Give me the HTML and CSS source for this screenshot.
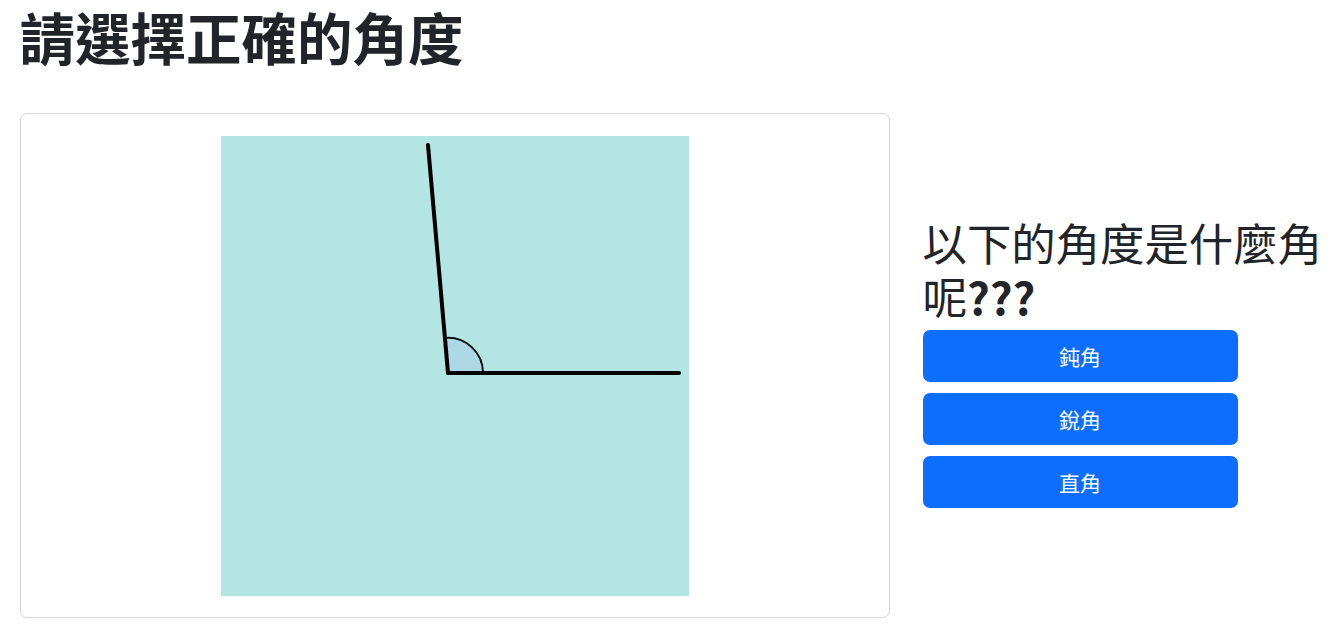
FILE: index.html
```html
<!DOCTYPE html>
<html lang="zh-Hant">
<head>
<meta charset="utf-8">
<title>請選擇正確的角度</title>
<link rel="stylesheet" href="styles.css">
</head>
<body>
<div class="page">
  <h1 class="title">請選擇正確的角度</h1>
  <div class="main">
    <div class="card">
      <svg class="canvas" width="468" height="460" viewBox="0 0 468 460">
        <rect x="0" y="0" width="468" height="460" fill="#b3e5e3"/>
        <path d="M227 237 L262 237 A35 35 0 0 0 224 202 Z" fill="#add8e6" stroke="#111" stroke-width="2"/>
        <line x1="227" y1="237" x2="458" y2="237" stroke="#000" stroke-width="4" stroke-linecap="round"/>
        <line x1="227" y1="237" x2="207" y2="9" stroke="#000" stroke-width="4" stroke-linecap="round"/>
      </svg>
    </div>
    <div class="side">
      <h2 class="question">以下的角度是什麼角呢<b>???</b></h2>
      <div class="buttons">
        <button class="btn">鈍角</button>
        <button class="btn">銳角</button>
        <button class="btn">直角</button>
      </div>
    </div>
  </div>
</div>
</body>
</html>
```
FILE: styles.css
```css
* { box-sizing: border-box; }
body {
  margin: 0;
  font-family: "Noto Sans CJK TC", "Noto Sans", sans-serif;
  color: #212529;
  background: #fff;
}
.page {
  padding: 0 0 0 19.5px;
}
.title {
  margin: 0;
  padding-top: 1px;
  font-size: 55.5px;
  font-weight: 700;
  line-height: 70px;
  letter-spacing: 0;
}
.main {
  display: flex;
  align-items: center;
  gap: 33px;
  margin-top: 42px;
}
.card {
  width: 870px;
  flex: none;
  border: 1px solid #d4d4d4;
  border-radius: 7px;
  padding: 22px 0 21px;
  display: flex;
  justify-content: center;
}
.canvas {
  display: block;
}
.side {
  width: 415px;
  flex: none;
  padding-bottom: 8px;
}
.question {
  margin: 0 0 7px;
  font-size: 44.4px;
  font-weight: 400;
  line-height: 54px;
}
.question b {
  font-weight: 700;
}
.buttons {
  display: flex;
  flex-direction: column;
  gap: 11px;
}
.btn {
  width: 315px;
  height: 52px;
  border: none;
  border-radius: 7px;
  background: #0d6efd;
  color: #fff;
  font-family: "Noto Sans CJK TC", "Noto Sans", sans-serif;
  font-size: 21px;
  padding: 0;
}
```
